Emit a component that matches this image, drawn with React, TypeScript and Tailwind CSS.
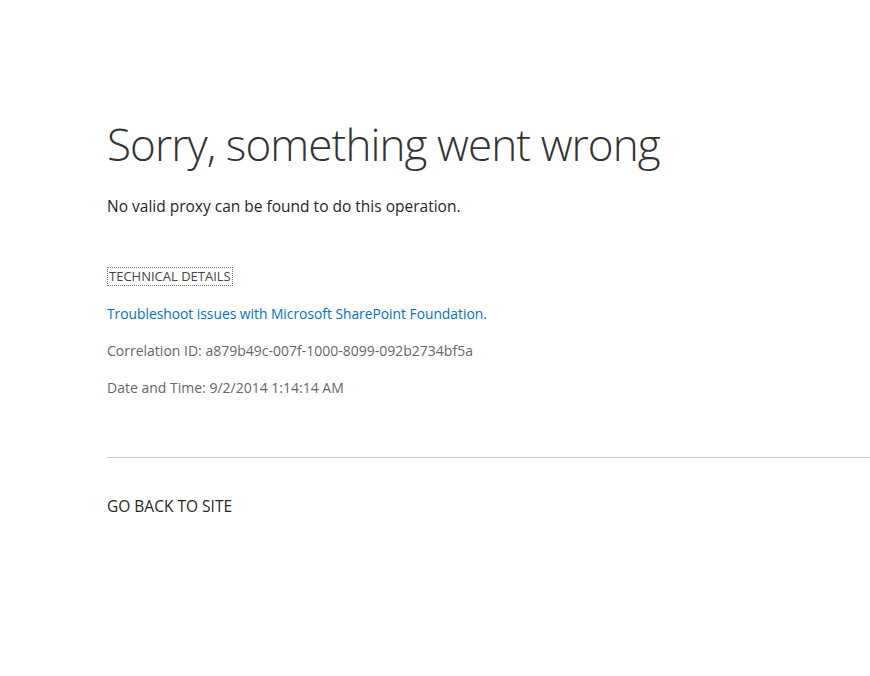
import React from 'react';

export default function App() {
  return (
    <div className="min-h-[676px] bg-white font-['Open_Sans',sans-serif] text-[#262626]">
      <div className="pl-[107px] pt-[114px]">
        <h1 className="text-[44px] font-light leading-[60px] tracking-[-0.9px] text-[#333]">
          Sorry, something went wrong
        </h1>
        <p className="mt-[21px] text-[15.5px] leading-[22px] text-[#262626]">
          No valid proxy can be found to do this operation.
        </p>

        <div className="mt-[50px] flex flex-col items-start">
          <span className="border border-dotted border-[#777] px-px text-[13px] leading-[17px] text-[#444]">
            TECHNICAL DETAILS
          </span>
          <a href="#" className="mt-[18px] text-[13.8px] leading-[19px] text-[#0072c6]">
            Troubleshoot issues with Microsoft SharePoint Foundation.
          </a>
          <p className="mt-[18px] text-[14px] leading-[19px] text-[#666]">
            Correlation ID: a879b49c-007f-1000-8099-092b2734bf5a
          </p>
          <p className="mt-[18px] text-[14px] leading-[19px] text-[#666]">
            Date and Time: 9/2/2014 1:14:14 AM
          </p>
        </div>

        <div className="mt-[60px] h-px bg-[#c6c6c6]" />

        <a href="#" className="mt-[37px] block text-[15.5px] leading-[22px] text-[#262626]">
          GO BACK TO SITE
        </a>
      </div>
    </div>
  );
}
